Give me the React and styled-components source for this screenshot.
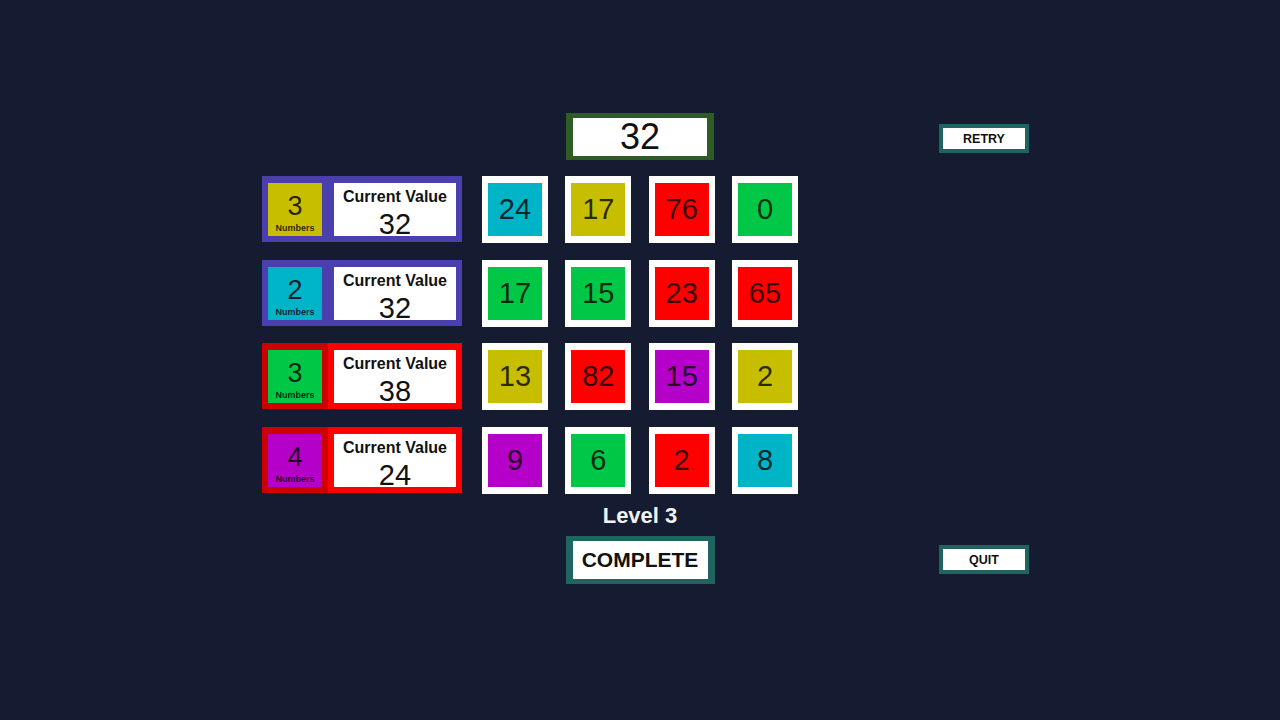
import React from 'react'
import styled, { createGlobalStyle } from 'styled-components'

const colors = {
  cyan: '#00b4c8',
  yellow: '#c8be00',
  red: '#ff0000',
  green: '#00c846',
  purple: '#b400c8'
}

const target = 32

const tiles = [
  [['24', 'cyan'], ['17', 'yellow'], ['76', 'red'], ['0', 'green']],
  [['17', 'green'], ['15', 'green'], ['23', 'red'], ['65', 'red']],
  [['13', 'yellow'], ['82', 'red'], ['15', 'purple'], ['2', 'yellow']],
  [['9', 'purple'], ['6', 'green'], ['2', 'red'], ['8', 'cyan']]
]

const groups = [
  { count: 3, fill: 'yellow', value: 32, edge: '#4a3fac', countEdge: '#4a3fac' },
  { count: 2, fill: 'cyan', value: 32, edge: '#4a3fac', countEdge: '#4a3fac' },
  { count: 3, fill: 'green', value: 38, edge: '#ff0000', countEdge: '#cc0000' },
  { count: 4, fill: 'purple', value: 24, edge: '#ff0000', countEdge: '#cc0000' }
]

export default function App() {
  return (
    <>
      <GlobalStyle />
      <Board>
        <TargetBox>{target}</TargetBox>
        <SideButton $row={1} $top={11}>RETRY</SideButton>

        {groups.map((group, i) => (
          <Group key={'g' + i} $row={i + 2}>
            <CountBox $edge={group.countEdge} $fill={colors[group.fill]}>
              <CountNumber>{group.count}</CountNumber>
              <CountLabel>Numbers</CountLabel>
            </CountBox>
            <ValueBox $edge={group.edge}>
              <ValueTitle>Current Value</ValueTitle>
              <ValueNumber>{group.value}</ValueNumber>
            </ValueBox>
          </Group>
        ))}

        {tiles.map((row, i) => (
          <TileRow key={'r' + i} $row={i + 2}>
            {row.map(([num, fill], j) => (
              <Tile key={j} $fill={colors[fill]}>
                {num}
              </Tile>
            ))}
          </TileRow>
        ))}

        <Level>Level 3</Level>
        <CompleteButton>COMPLETE</CompleteButton>
        <SideButton $row={7} $top={9}>QUIT</SideButton>
      </Board>
    </>
  )
}

const GlobalStyle = createGlobalStyle`
  html, body {
    margin: 0;
    background: #151b30;
    font-family: "Liberation Sans", Arial, sans-serif;
  }
`

const Board = styled.div`
  display: grid;
  grid-template-columns: 1fr 316px 1fr;
  grid-template-rows: 63px 83.5px 83.5px 83.5px 78.5px 31px 48px;
  column-gap: 20px;
  align-items: start;
  width: 1280px;
  height: 720px;
  box-sizing: border-box;
  padding-top: 113px;
`

const TargetBox = styled.div`
  grid-column: 2;
  grid-row: 1;
  justify-self: center;
  width: 148px;
  height: 47px;
  box-sizing: border-box;
  border: 6px solid #2e5c24;
  border-width: 5px 7px 4px 7px;
  background: #fff;
  display: flex;
  align-items: center;
  justify-content: center;
  font-size: 36px;
  color: #111;
`

const SideButton = styled.div`
  grid-column: 3;
  grid-row: ${props => props.$row};
  justify-self: start;
  margin-left: 121px;
  margin-top: ${props => props.$top}px;
  width: 90px;
  height: 29px;
  box-sizing: border-box;
  border: 4px solid #1f6461;
  background: #fff;
  display: flex;
  align-items: center;
  justify-content: center;
  font-size: 12.5px;
  font-weight: bold;
  color: #111;
`

const Group = styled.div`
  grid-column: 1;
  grid-row: ${props => props.$row};
  justify-self: end;
  display: flex;
  height: 66px;
`

const CountBox = styled.div`
  width: 66px;
  box-sizing: border-box;
  border: 6px solid ${props => props.$edge};
  border-width: 7px 6px 6px 6px;
  background: ${props => props.$fill};
  display: flex;
  flex-direction: column;
  align-items: center;
  padding-top: 10px;
  color: rgba(0, 0, 0, 0.82);
`

const CountNumber = styled.div`
  font-size: 27px;
  line-height: 26px;
`

const CountLabel = styled.div`
  margin-top: 4px;
  font-size: 9px;
  line-height: 10px;
  font-weight: bold;
`

const ValueBox = styled.div`
  width: 134px;
  box-sizing: border-box;
  border: 6px solid ${props => props.$edge};
  border-width: 7px 6px 6px 6px;
  background: #fff;
  display: flex;
  flex-direction: column;
  align-items: center;
  padding-top: 5px;
  color: #111;
`

const ValueTitle = styled.div`
  font-size: 16px;
  line-height: 18px;
  font-weight: bold;
`

const ValueNumber = styled.div`
  margin-top: 4px;
  font-size: 29px;
  line-height: 28px;
`

const TileRow = styled.div`
  grid-column: 2;
  grid-row: ${props => props.$row};
  display: flex;
  justify-content: space-between;
`

const Tile = styled.div`
  width: 66px;
  height: 67px;
  box-sizing: border-box;
  border: 6px solid #fff;
  border-width: 7px 6px;
  background: ${props => props.$fill};
  display: flex;
  align-items: center;
  justify-content: center;
  font-size: 29px;
  color: rgba(0, 0, 0, 0.8);
`

const Level = styled.div`
  grid-column: 2;
  grid-row: 6;
  justify-self: center;
  font-size: 22px;
  line-height: 22px;
  font-weight: bold;
  color: #f2f2f2;
`

const CompleteButton = styled.div`
  grid-column: 2;
  grid-row: 7;
  justify-self: center;
  width: 149px;
  height: 48px;
  box-sizing: border-box;
  border: 6px solid #1f6461;
  border-width: 5px 7px;
  background: #fff;
  display: flex;
  align-items: center;
  justify-content: center;
  font-size: 21px;
  font-weight: bold;
  color: #111;
`
